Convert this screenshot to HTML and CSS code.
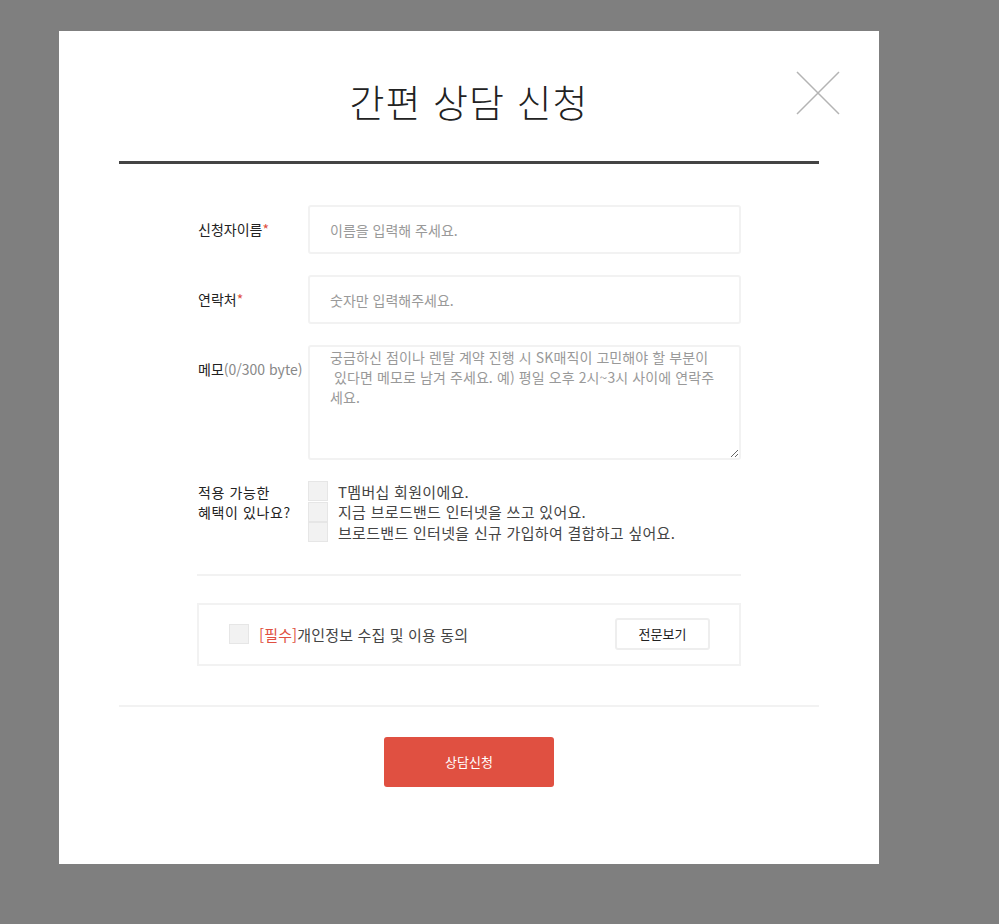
FILE: index.html
```html
<!DOCTYPE html>
<html lang="ko">
<head>
    <meta charset="UTF-8">
    <title>간편 상담 신청</title>
    <link rel="stylesheet" href="styles.css">
</head>
<body>
    <div class="dim">
        <div class="layer-pop">
            <div class="pop-head">
                <h2 class="pop-title">간편 상담 신청</h2>
                <a href="javascript:;" class="btn-close" title="닫기">
                    <svg width="44" height="44" viewBox="0 0 44 44"><path d="M1 1L43 43M43 1L1 43" stroke="#b4b4b4" stroke-width="1.5" fill="none"/></svg>
                </a>
            </div>
            <div class="pop-body">
                <div class="form-row">
                    <label class="form-label">신청자이름<em>*</em></label>
                    <input type="text" class="inp" placeholder="이름을 입력해 주세요.">
                </div>
                <div class="form-row">
                    <label class="form-label">연락처<em>*</em></label>
                    <input type="text" class="inp" placeholder="숫자만 입력해주세요.">
                </div>
                <div class="form-row">
                    <label class="form-label">메모<span class="byte">(0/300 byte)</span></label>
                    <textarea class="txt" placeholder="궁금하신 점이나 렌탈 계약 진행 시 SK매직이 고민해야 할 부분이&#10; 있다면 메모로 남겨 주세요. 예) 평일 오후 2시~3시 사이에 연락주세요."></textarea>
                </div>
                <div class="form-row benefit">
                    <label class="form-label">적용 가능한<br>혜택이 있나요?</label>
                    <ul class="chk-list">
                        <li><span class="chk"></span>T멤버십 회원이에요.</li>
                        <li><span class="chk"></span>지금 브로드밴드 인터넷을 쓰고 있어요.</li>
                        <li><span class="chk"></span>브로드밴드 인터넷을 신규 가입하여 결합하고 싶어요.</li>
                    </ul>
                </div>
                <div class="agree-box">
                    <div class="agree-txt"><span class="chk"></span><span class="red">[필수]</span>개인정보 수집 및 이용 동의</div>
                    <a href="javascript:;" class="btn-view">전문보기</a>
                </div>
            </div>
            <div class="pop-foot">
                <a href="javascript:;" class="btn-submit">상담신청</a>
            </div>
        </div>
    </div>
</body>
</html>
```

FILE: styles.css
```css
*{
    margin:0;  padding:0;
    box-sizing: border-box;
    text-decoration: none;
}
body{
    background-color: #7f7f7f;
    font-family: "Noto Sans CJK KR", "Noto Sans", sans-serif;
    font-size: 14px;
    color: #222;
}
.dim{
    width: 999px;
    height: 924px;
    padding: 31px 0 0 59px;
}
.layer-pop{
    width: 820px;
    height: 833px;
    background-color: #fff;
    padding: 0 60px;
}
.pop-head{
    position: relative;
    height: 133px;
    border-bottom: 3px solid #444;
    text-align: center;
}
.pop-title{
    padding-top: 44px;
    font-size: 38px;
    font-weight: 300;
    line-height: 52px;
    letter-spacing: 1px;
    color: #222;
}
.btn-close{
    position: absolute;
    top: 40px;
    right: -21px;
    width: 44px;
    height: 44px;
}
.btn-close svg{
    display: block;
}
.pop-body{
    width: 544px;
    margin: 0 auto;
    padding-top: 41px;
}
.form-row{
    display: flex;
    margin-bottom: 21px;
}
.form-label{
    width: 111px;
    flex-shrink: 0;
    padding-left: 1px;
    line-height: 20px;
    padding-top: 14px;
    color: #222;
}
.form-label em{
    font-style: normal;
    color: #e05041;
}
.form-label .byte{
    color: #888;
}
.inp{
    width: 434px;
    height: 49px;
    border: 2px solid #f2f2f2;
    border-radius: 3px;
    padding: 0 20px;
    font-family: inherit;
    font-size: 14px;
    color: #222;
    outline: none;
}
.inp::placeholder,
.txt::placeholder{
    color: #999;
}
.txt{
    width: 433px;
    height: 115px;
    border: 2px solid #f2f2f2;
    border-radius: 3px;
    padding: 0 20px;
    font-family: inherit;
    font-size: 14px;
    line-height: 20px;
    letter-spacing: 0.1px;
    color: #222;
    outline: none;
}
.benefit{
    margin-bottom: 0;
    padding-bottom: 31px;
    border-bottom: 2px solid #f2f2f2;
}
.benefit .form-label{
    padding-top: 1px;
    letter-spacing: 0.6px;
}
.chk-list{
    list-style: none;
}
.chk-list li{
    display: flex;
    align-items: center;
    height: 20.5px;
    font-size: 15px;
    letter-spacing: 0.3px;
    color: #444;
}
.chk{
    display: inline-block;
    width: 20px;
    height: 20px;
    background-color: #f2f2f2;
    border: 1px solid #e6e6e6;
    margin-right: 10px;
    flex-shrink: 0;
}
.agree-box{
    display: flex;
    align-items: center;
    justify-content: space-between;
    margin-top: 27px;
    height: 63px;
    border: 2px solid #f2f2f2;
    padding: 0 29px 0 30px;
}
.agree-txt{
    display: flex;
    align-items: center;
    font-size: 15px;
    letter-spacing: 0.15px;
    color: #444;
}
.agree-txt .red{
    color: #e05041;
}
.btn-view{
    width: 95px;
    height: 32px;
    line-height: 28px;
    text-align: center;
    border: 2px solid #eee;
    border-radius: 3px;
    font-size: 13px;
    color: #222;
}
.pop-foot{
    margin-top: 39px;
    border-top: 2px solid #f2f2f2;
    padding-top: 30px;
    text-align: center;
}
.btn-submit{
    display: inline-block;
    width: 170px;
    height: 50px;
    line-height: 50px;
    background-color: #e05041;
    border-radius: 3px;
    color: #fff;
    font-size: 13px;
}
```
